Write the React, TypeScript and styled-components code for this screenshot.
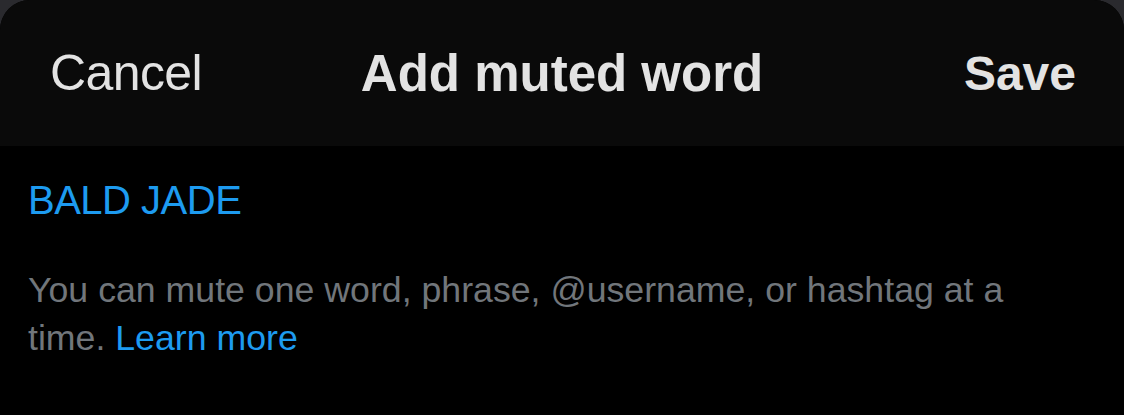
import styled, { createGlobalStyle } from 'styled-components';

const GlobalStyle = createGlobalStyle`
  html, body {
    margin: 0;
    padding: 0;
    background: #2a2a2e;
  }
  * { box-sizing: border-box; }
`

const Sheet = styled.div`
  width: 1124px;
  height: 415px;
  background: #000;
  border-radius: 30px 30px 0 0;
  overflow: hidden;
  font-family: "Liberation Sans", Arial, sans-serif;
`

const TopBar = styled.header`
  height: 146px;
  background: #0a0a0a;
  display: flex;
  align-items: center;
  justify-content: space-between;
  padding: 0 48px 0 50px;
  position: relative;
`

const BarButton = styled.button<{ $bold?: boolean }>`
  background: none;
  border: none;
  padding: 0;
  color: #e3e3e3;
  font-family: inherit;
  font-size: ${p => (p.$bold ? '48px' : '50px')};
  font-weight: ${p => (p.$bold ? 700 : 400)};
  letter-spacing: ${p => (p.$bold ? '0' : '-0.6px')};
`

const Title = styled.h1`
  margin: 0;
  position: absolute;
  left: 0;
  right: 0;
  text-align: center;
  pointer-events: none;
  color: #e3e3e3;
  font-size: 51px;
  font-weight: 700;
`

const Body = styled.main`
  padding: 30px 28px 0 28px;
`

const Word = styled.div`
  color: #1d9bf0;
  font-size: 40px;
  line-height: 48px;
  letter-spacing: -0.5px;
`

const Hint = styled.p`
  margin: 42px 0 0 0;
  max-width: 1040px;
  color: #71767b;
  font-size: 35.7px;
  line-height: 48px;
`

const HintLink = styled.a`
  color: #1d9bf0;
  text-decoration: none;
`

export default function App() {
  return (
    <>
      <GlobalStyle />
      <Sheet>
        <TopBar>
          <BarButton>Cancel</BarButton>
          <Title>Add muted word</Title>
          <BarButton $bold>Save</BarButton>
        </TopBar>
        <Body>
          <Word>BALD JADE</Word>
          <Hint>
            You can mute one word, phrase, @username, or hashtag at a time.{' '}
            <HintLink href="#">Learn more</HintLink>
          </Hint>
        </Body>
      </Sheet>
    </>
  );
}
